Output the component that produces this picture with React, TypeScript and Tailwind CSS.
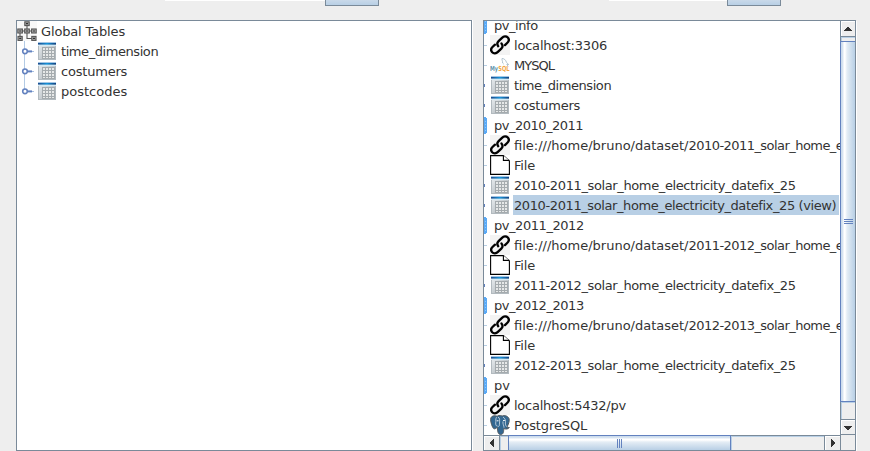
import React from 'react';

const TableIcon = () => (
  <svg width="18" height="18" viewBox="0 0 18 18" className="shrink-0" shapeRendering="crispEdges">
    <defs>
      <linearGradient id="head" x1="0" x2="1" y1="0" y2="0">
        <stop offset="0" stopColor="#1d4a8c" />
        <stop offset="0.5" stopColor="#1496dc" />
        <stop offset="1" stopColor="#12407f" />
      </linearGradient>
      <linearGradient id="side" x1="0" x2="1" y1="0" y2="1">
        <stop offset="0" stopColor="#eef2f4" />
        <stop offset="1" stopColor="#a3abb1" />
      </linearGradient>
    </defs>
    <rect width="18" height="18" fill="url(#side)" />
    <rect width="18" height="1" fill="#a5c6e4" />
    <rect y="1" width="18" height="1" fill="url(#head)" />
    <rect y="2" width="18" height="1" fill="url(#head)" opacity=".6" />
    <rect y="3" width="18" height="1" fill="#d3ebf6" />
    <rect x="4" y="5" width="13" height="12" fill="#e6e8e8" />
    <path d="M4.5 5v12M7.5 5v12M10.5 5v12M13.5 5v12M16.5 5v12M4 5.5h13M4 8.5h13M4 11.5h13M4 14.5h13M4 16.5h13" stroke="#a5abae" />
    <path d="M.5 4v14M17.5 4v14M0 17.5h18" stroke="#b2babf" />
  </svg>
);

const LinkIcon = () => (
  <svg width="20" height="20" viewBox="0 0 20 20" className="shrink-0 bg-[#f3f3f3]" fill="none" stroke="#000" strokeWidth="2.3" strokeLinecap="round">
    <path d="M8.2 11.2C6.9 9.5 7.1 7.6 8.6 6.1L12 2.8C13.8 1 16.3 1 17.8 2.5C19.2 4.1 19 6.2 17.4 7.8L15 10.1" />
    <path d="M11.5 8.5C12.9 10.2 12.8 12.1 11.3 13.6L7.9 16.9C6.1 18.7 3.7 18.8 2.2 17.3C.8 15.8.9 13.6 2.5 12L5 9.7" />
  </svg>
);

const FileIcon = () => (
  <svg width="20" height="20" viewBox="0 0 20 20" className="shrink-0" fill="#fff" stroke="#000" strokeWidth="1.1">
    <path d="M.6 .6H13.4L19.4 6V19.4H.6Z" />
    <path d="M13.4.6V5.4H19.3" />
  </svg>
);

const MysqlIcon = () => (
  <svg width="20" height="20" viewBox="0 0 20 20" className="shrink-0">
    <path d="M12 3.5C14 3.5 16 5 16.4 7.3L18.7 9.5L16.8 9.4L18.2 11.5M12 3.5C11.7 5 12.8 6 12.6 8L13.8 9.2" fill="none" stroke="#9eb5c4" strokeWidth=".8" />
    <text x="0" y="15.5" fontSize="7" fontWeight="bold" fill="#6293ac" textLength="8" lengthAdjust="spacingAndGlyphs">My</text>
    <text x="8.2" y="15.5" fontSize="7" fontWeight="bold" fill="#f3a646" textLength="11.3" lengthAdjust="spacingAndGlyphs">SQL</text>
  </svg>
);

const PostgresIcon = () => (
  <svg width="20" height="20" viewBox="0 0 20 20" className="shrink-0">
    <path d="M5 .8C2.5.5.5 2 .6 4.6C.8 7.5 2 12 3.7 13.6C5 14.5 6.4 12.8 7.3 12.3C7.6 14 7.2 19.5 10.6 19.5C14 19.5 13.5 16 13.8 13.6C16 14.5 18.5 14 19.3 12.5C18.5 12.4 17.5 12.5 16.9 12C18.5 9.5 19.8 5.5 19 3.5C17.5.5 14.3.2 12.2 1C9.7.2 8.1.5 7.2 1.2Z" fill="#336791" stroke="#52585d" strokeWidth="1" />
    <path d="M6.5 2.2C5.4 4 6 6 5.7 8C5.4 10 6.8 11.7 7.7 11M8 2.2C10 2.5 9.7 5.5 9.5 8C9.3 9.7 9.7 11 8.3 11.7M13 2C15.3 3.4 15.8 5.7 15.4 8C15.1 9.7 16 10.6 16.5 11.7M13 6.4C12.5 9 14.1 10.5 14 12.7" fill="none" stroke="#d6e0e8" strokeWidth=".8" />
    <path d="M6.7 5.8h1.8M13.1 5.5h1.7" stroke="#fff" strokeWidth="1" />
  </svg>
);

const NetworkIcon = () => (
  <svg width="20" height="20" viewBox="0 0 20 20" className="shrink-0 bg-[#f8f8f8]" fill="#aaa" stroke="#555" strokeWidth="1.1">
    <path d="M10 4v4M4 10h12M3 12v4M10 12v5.5h5" fill="none" />
    <rect x="7.8" y=".8" width="4.4" height="3.8" />
    <rect x=".8" y="8" width="4.6" height="4" />
    <rect x="7.7" y="8" width="4.6" height="4" />
    <rect x="14.6" y="8" width="4.6" height="4" />
    <rect x="1" y="15.4" width="4.2" height="4" />
    <rect x="14.8" y="15.4" width="4.2" height="4" />
    <path d="M9 2.6h2M2.2 10h2M9 10h2M16 10h2M2.2 17.4h2M16 17.4h2" stroke="#333" />
  </svg>
);

const ServerEdge = () => (
  <svg width="3" height="17" viewBox="0 0 3 17" className="shrink-0" shapeRendering="crispEdges">
    <path d="M0 0H2V1H3V16H2V17H0Z" fill="#5aa9f5" />
    <path d="M1 4h1M1 7h1M1 10h1M1 13h1" stroke="#8bc8ff" />
  </svg>
);

const Handle = ({ last }: { last?: boolean }) => (
  <svg width="21" height="20" viewBox="0 0 21 20" className="shrink-0">
    <path d={last ? 'M7.5 0V10' : 'M7.5 0V20'} stroke="#b3cbe5" />
    <path d="M15 10.5h2" stroke="#a8c1e2" />
    <path d="M10 10.4h5" stroke="#6382bf" strokeWidth="2" />
    <circle cx="8" cy="10.3" r="2.3" fill="#fff" stroke="#6382bf" strokeWidth="1.6" />
  </svg>
);

type Kind = 'db' | 'link' | 'mysql' | 'file' | 'table' | 'pg';
type TreeNode = { kind: Kind; text: string; track: string; prefix?: string; selected?: boolean };

const tight = 'tracking-[-0.38px]';
const tighter = 'tracking-[-0.55px]';
const nodes: TreeNode[] = [
  { kind: 'db', text: 'pv_info', track: 'tracking-[-0.45px]' },
  { kind: 'link', text: 'localhost:3306', track: 'tracking-[-0.2px]' },
  { kind: 'mysql', text: 'MYSQL', track: 'tracking-[-1px]' },
  { kind: 'table', text: 'time_dimension', track: 'tracking-[-0.43px]' },
  { kind: 'table', text: 'costumers', track: 'tracking-[-0.2px]' },
  { kind: 'db', text: 'pv_2010_2011', track: 'tracking-[-0.5px]' },
  { kind: 'link', prefix: 'file:///home/bruno/dataset/', text: '2010-2011_solar_home_e', track: tighter },
  { kind: 'file', text: 'File', track: 'tracking-[-0.2px]' },
  { kind: 'table', text: '2010-2011_solar_home_electricity_datefix_25', track: tight },
  { kind: 'table', text: '2010-2011_solar_home_electricity_datefix_25 (view)', track: 'tracking-[-0.4px]', selected: true },
  { kind: 'db', text: 'pv_2011_2012', track: 'tracking-[-0.45px]' },
  { kind: 'link', prefix: 'file:///home/bruno/dataset/', text: '2011-2012_solar_home_e', track: tighter },
  { kind: 'file', text: 'File', track: 'tracking-[-0.2px]' },
  { kind: 'table', text: '2011-2012_solar_home_electricity_datefix_25', track: tight },
  { kind: 'db', text: 'pv_2012_2013', track: 'tracking-[-0.45px]' },
  { kind: 'link', prefix: 'file:///home/bruno/dataset/', text: '2012-2013_solar_home_e', track: tighter },
  { kind: 'file', text: 'File', track: 'tracking-[-0.2px]' },
  { kind: 'table', text: '2012-2013_solar_home_electricity_datefix_25', track: tight },
  { kind: 'db', text: 'pv', track: 'tracking-normal' },
  { kind: 'link', text: 'localhost:5432/pv', track: 'tracking-[-0.25px]' },
  { kind: 'pg', text: 'PostgreSQL', track: 'tracking-[-0.1px]' },
];

const icons = { link: LinkIcon, mysql: MysqlIcon, file: FileIcon, pg: PostgresIcon, table: TableIcon };

function Node({ kind, text, track, prefix, selected }: TreeNode) {
  if (kind === 'db') {
    return (
      <div className="flex h-5 shrink-0 items-center">
        <ServerEdge />
        <span className={`ml-[7px] h-5 leading-[22px] ${track}`}>{text}</span>
      </div>
    );
  }
  const Icon = icons[kind];
  return (
    <div className="flex h-5 shrink-0 items-center">
      <span className="flex w-[5px] shrink-0">
        {kind === 'table' ? <i className="h-[3px] w-px bg-[#6382bf]" /> : <i className="h-px w-[3px] bg-[#b8cfe5]" />}
      </span>
      <span className="mr-[3px] flex w-[21px] shrink-0 justify-center pl-px">
        <Icon />
      </span>
      <span className={`h-5 shrink-0 pl-px leading-[22px] ${track} ${selected ? 'w-[326px] bg-[#b8cfe5]' : ''}`}>
        {prefix && <span className="tracking-normal">{prefix}</span>}
        {text}
      </span>
    </div>
  );
}

const globals = [
  { text: 'time_dimension', track: 'tracking-[-0.43px]' },
  { text: 'costumers', track: 'tracking-[-0.2px]' },
  { text: 'postcodes', track: 'tracking-normal' },
];

export default function App() {
  return (
    <div className="flex h-[451px] w-[870px] flex-col overflow-hidden bg-[#eeeeee] font-['DejaVu_Sans',sans-serif] text-[13px] whitespace-nowrap text-[#333333]">
      <div className="flex h-5 shrink-0 items-start pl-[165px]">
        <div className="h-px w-40 bg-white" />
        <div className="h-1.5 w-[54px] border border-t-0 border-[#7a8a99] bg-linear-to-b from-[#c9d9e9] to-[#b8cfe5]" />
        <div className="ml-[230px] h-px w-[118px] bg-white" />
        <div className="h-1.5 w-[54px] border border-t-0 border-[#7a8a99] bg-linear-to-b from-[#c9d9e9] to-[#b8cfe5]" />
      </div>
      <div className="flex h-[431px] pl-4">
        <div className="h-[431px] w-[456px] border border-[#7a8a99] bg-white">
          <div className="flex h-5 items-center">
            <NetworkIcon />
            <span className="ml-1 h-5 leading-[22px] tracking-[-0.15px]">Global Tables</span>
          </div>
          {globals.map((g, i) => (
            <div key={g.text} className="flex h-5 items-center">
              <Handle last={i === globals.length - 1} />
              <TableIcon />
              <span className={`ml-[5px] h-5 leading-[22px] ${g.track}`}>{g.text}</span>
            </div>
          ))}
        </div>
        <div className="h-[431px] w-px bg-white" />
        <div className="ml-[10px] flex h-[431px] w-[373px] flex-col border border-[#7a8a99]">
          <div className="flex h-[414px] shrink-0">
            <div className="flex w-[356px] shrink-0 flex-col overflow-hidden bg-white">
              <div className="-mt-1.5 flex flex-col">
                {nodes.map((n, i) => (
                  <Node key={i} {...n} />
                ))}
              </div>
            </div>
            <div className="flex w-[15px] shrink-0 flex-col border-l border-[#7a8a99]">
              <div className="flex h-4 items-center justify-center border-b border-[#7a8a99] bg-[#eeeeee] shadow-[inset_1px_1px_0_#fff]">
                <svg width="8" height="4" viewBox="0 0 8 4" shapeRendering="crispEdges"><path d="M3 0h2v1h1v1h1v1h1v1H0V3h1V2h1V1h1Z" fill="#333" /></svg>
              </div>
              <div className="h-1 bg-[#eeeeee] shadow-[inset_1px_1px_0_#b8cfe5]" />
              <div className="-ml-px flex h-[361px] items-center justify-center border border-r-0 border-[#6382bf] bg-[linear-gradient(to_right,#c8d9ec_0,#dce7f2_2px,#fff_3px,#fff_4px,#e4edf5_6px,#b8cfe5_14px)]">
                <div className="flex h-[5px] w-[9px] flex-col justify-between">
                  <i className="h-px bg-[#6382bf]" />
                  <i className="h-px bg-[#6382bf]" />
                  <i className="h-px bg-[#6382bf]" />
                </div>
              </div>
              <div className="h-[18px] border-b border-[#7a8a99] bg-[#eeeeee] shadow-[inset_1px_1px_0_#b8cfe5]" />
              <div className="flex h-[15px] items-center justify-center border-b border-[#7a8a99] bg-[#eeeeee] pt-0.5 shadow-[inset_1px_1px_0_#fff]">
                <svg width="8" height="4" viewBox="0 0 8 4" shapeRendering="crispEdges"><path d="M0 0h8v1H7v1H6v1H5v1H3V3H2V2H1V1H0Z" fill="#333" /></svg>
              </div>
            </div>
          </div>
          <div className="flex h-[15px] shrink-0">
            <div className="flex w-[357px] border-t border-r border-[#7a8a99]">
              <div className="flex w-4 items-center justify-center border-r border-[#7a8a99] shadow-[inset_1px_1px_0_#fff]">
                <svg width="4" height="8" viewBox="0 0 4 8" shapeRendering="crispEdges"><path d="M4 0v8H3V7H2V6H1V5H0V3h1V2h1V1h1V0Z" fill="#333" /></svg>
              </div>
              <div className="w-2 shadow-[inset_1px_1px_0_#b8cfe5]" />
              <div className="-mt-px flex w-[223px] items-center justify-center border border-b-0 border-[#6382bf] bg-[linear-gradient(to_bottom,#c8d9ec_0,#dce7f2_2px,#fff_3px,#fff_4px,#e4edf5_6px,#b8cfe5_14px)]">
                <div className="flex h-[9px] w-[5px] justify-between">
                  <i className="w-px bg-[#6382bf]" />
                  <i className="w-px bg-[#6382bf]" />
                  <i className="w-px bg-[#6382bf]" />
                </div>
              </div>
              <div className="w-[94px] border-r border-[#7a8a99] shadow-[inset_1px_1px_0_#b8cfe5]" />
              <div className="flex w-[15px] items-center justify-center shadow-[inset_1px_1px_0_#fff]">
                <svg width="4" height="8" viewBox="0 0 4 8" shapeRendering="crispEdges"><path d="M0 0h1v1h1v1h1v1h1v2H3v1H2v1H1v1H0Z" fill="#333" /></svg>
              </div>
            </div>
          </div>
        </div>
        <div className="mt-px h-[430px] w-px bg-white" />
      </div>
    </div>
  );
}
